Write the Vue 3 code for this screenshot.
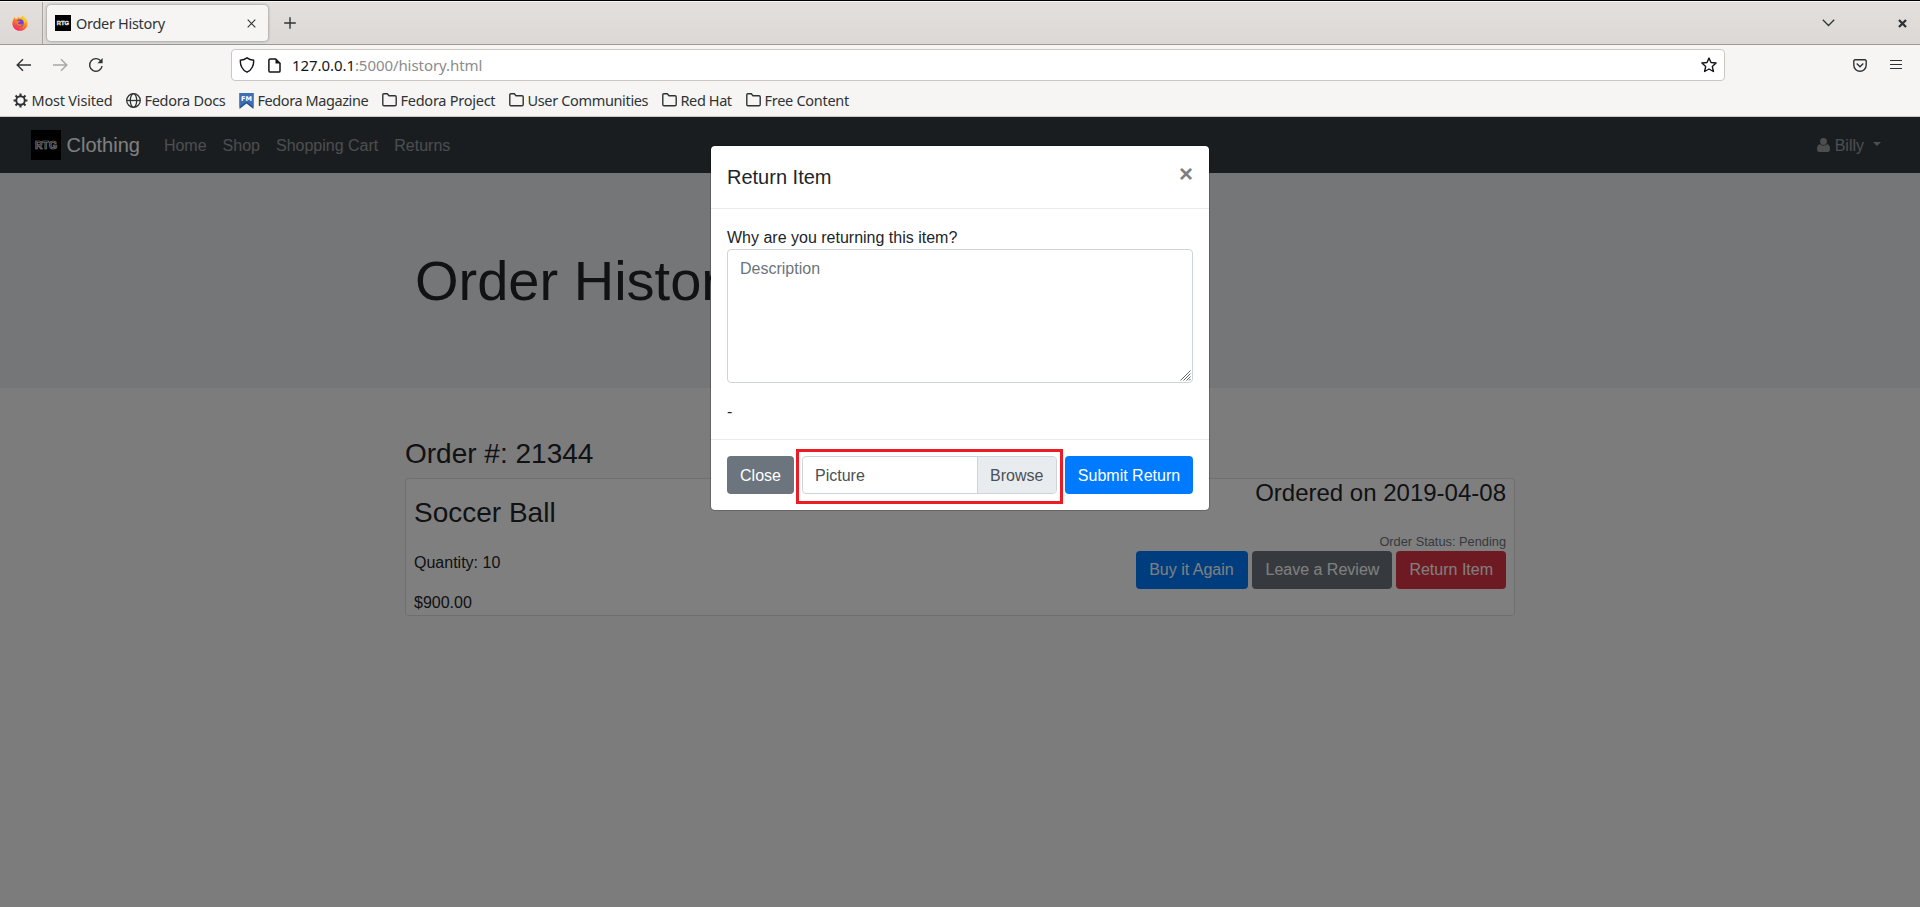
<script setup>
const bookmarks = [
  { label: 'Most Visited', icon: 'gear', width: 80, gap: 14, spacing: -0.2 },
  { label: 'Fedora Docs', icon: 'globe', width: 81, gap: 13, spacing: -0.3 },
  { label: 'Fedora Magazine', icon: 'fm', width: 111, gap: 13, spacing: -0.42 },
  { label: 'Fedora Project', icon: 'folder', width: 95, gap: 13, spacing: -0.25 },
  { label: 'User Communities', icon: 'folder', width: 121, gap: 13, spacing: -0.35 },
  { label: 'Red Hat', icon: 'folder', width: 52, gap: 13, spacing: -0.4 },
  { label: 'Free Content', icon: 'folder', width: 85, gap: 0, spacing: -0.28 },
]
const links = ['Home', 'Shop', 'Shopping Cart', 'Returns']
</script>

<template>
  <div class="window">
    <header class="chrome">
      <div class="tabbar">
        <div class="pinned">
          <svg width="16" height="16" viewBox="0 0 16 16">
            <defs>
              <linearGradient id="flame" x1="0.8" y1="0" x2="0.2" y2="1">
                <stop offset="0" stop-color="#ffe226" />
                <stop offset="0.45" stop-color="#ff8a1e" />
                <stop offset="1" stop-color="#f5156c" />
              </linearGradient>
            </defs>
            <path d="M2.3 2.2 3.5 3.8 5.4 3.4 6.2 1.8 7.6 3 9.3 2.6 10.3.3c1 1.6 4.6 3 5.2 7.6.5 4.400-3 7.900-7.500 7.900S.4 12.600.4 8.500c0-2.700 1-3.600 1.900-6.300z" fill="url(#flame)" />
            <circle cx="8" cy="8" r="3.700" fill="#7043d9" />
            <path d="M3.800 6.300c1.600-.8 3.500-.4 4.700.3-1.300.4-1.600 1-2.700 1.200.3 1.800 3.200 2.300 5 1-1 3.600-6.800 3.300-7-2.500z" fill="#ff7a1f" />
            <path d="M10 3c1.500 1.200 2.800 3 2.300 5.500l1.700-2-1-3-2.600-2.500z" fill="#ffc928" />
          </svg>
        </div>
        <div class="tab">
          <svg width="16" height="16" viewBox="0 0 30 30">
            <rect width="30" height="30" />
            <text x="15" y="18.500" text-anchor="middle" textLength="23" lengthAdjust="spacingAndGlyphs" class="logo-text bright">RTG</text>
          </svg>
          <span class="tab-title">Order History</span>
          <svg width="9" height="9" viewBox="0 0 9 9" class="line"><path d="M.7.7l7.600 7.600M8.300.7.7 8.300" stroke-width="1.100" /></svg>
        </div>
        <svg class="plus line" width="12" height="12" viewBox="0 0 12 12"><path d="M6 .2v11.600M.2 6h11.600" stroke-width="1.400" /></svg>
        <div class="winctl">
          <svg class="line" width="13" height="8" viewBox="0 0 13 8"><path d="M.8.8l5.700 5.700L12.200.8" stroke-width="1.300" /></svg>
          <svg class="line" width="9" height="9" viewBox="0 0 9 9"><path d="M1 1l7 7M8 1 1 8" stroke-width="2.300" /></svg>
        </div>
      </div>

      <div class="toolbar">
        <div class="nav-buttons">
          <svg class="line" width="16" height="14" viewBox="0 0 16 14"><path d="M7 1.200 1.200 7 7 12.800M1.200 7h13.800" stroke-width="1.400" /></svg>
          <svg class="line dim" width="16" height="14" viewBox="0 0 16 14"><path d="M9 1.200 14.800 7 9 12.800M14.800 7H1" stroke-width="1.400" /></svg>
          <svg class="line" width="16" height="16" viewBox="0 0 16 16"><path d="M13.300 4.700A6.300 6.300 0 1 0 14.100 9" stroke-width="1.400" /><path d="M14.600 1v5.200H9.400z" fill="#2e3436" stroke="none" /></svg>
        </div>
        <div class="urlbar">
          <svg class="line dark shield" width="16" height="16" viewBox="0 0 16 16"><path d="M8 .9C6.300 2.300 3.900 3.100 1.400 3.200 1 8 3.200 13.200 8 15.200c4.800-2 7-7.200 6.600-12C12.100 3.100 9.700 2.300 8 .9z" stroke-width="1.400" /></svg>
          <svg class="line dark" width="13" height="15" viewBox="0 0 13 15"><path d="M2.300.9h5.300l4.400 4.400v7.600a1.200 1.200 0 0 1-1.200 1.200H2.300A1.400 1.400 0 0 1 .9 12.900V2.300A1.400 1.400 0 0 1 2.300.9z" stroke-width="1.500" /><path d="M7.500.8v4.600H12z" fill="#15141a" stroke="none" /></svg>
          <span class="url"><b>127.0.0.1</b>:5000/history.html</span>
          <svg class="line dark" width="16" height="16" viewBox="0 0 16 16"><path d="M8 1.100l2 4.400 5.100.5-3.800 3.400 1.100 5.100L8 12l-4.400 2.500 1.100-5.100L.9 6 6 5.500z" stroke-width="1.400" stroke-linejoin="round" /></svg>
        </div>
        <div class="tools">
          <svg class="line" width="14" height="13" viewBox="0 0 14 13"><path d="M2 .8h10a1.200 1.200 0 0 1 1.200 1.200v4a6.200 6.200 0 0 1-12.400 0V2A1.200 1.200 0 0 1 2 .8z" stroke-width="1.400" /><path d="M3.700 4.500 7 7.700l3.300-3.200" stroke-width="1.400" /></svg>
          <svg class="line" width="12" height="12" viewBox="0 0 12 12"><path d="M0 1.500h12M0 5.500h12M0 9.500h12" stroke-width="1.200" /></svg>
        </div>
      </div>

      <nav class="bookmarks">
        <a v-for="b in bookmarks" :key="b.label" class="bookmark" :style="{ marginRight: b.gap + 'px' }">
          <svg v-if="b.icon === 'gear'" class="line" width="15" height="15" viewBox="0 0 16 16">
            <circle cx="8" cy="8" r="4.500" stroke-width="2" />
            <path d="M8 .6v3M8 12.400v3M.6 8h3M12.400 8h3M2.700 2.700l2.100 2.100M11.200 11.200l2.100 2.100M13.300 2.700l-2.100 2.100M4.800 11.200l-2.100 2.100" stroke-width="2.200" />
          </svg>
          <svg v-else-if="b.icon === 'globe'" class="line" width="15" height="15" viewBox="0 0 15 15">
            <circle cx="7.500" cy="7.500" r="6.800" stroke-width="1.300" />
            <ellipse cx="7.500" cy="7.500" rx="3.200" ry="6.800" stroke-width="1.300" />
            <path d="M1 7.500h13" stroke-width="1.300" />
          </svg>
          <svg v-else-if="b.icon === 'fm'" width="15" height="16" viewBox="0 0 15 16">
            <path d="M.5 0h14v16L7.500 10.500.5 16z" fill="#294f8d" />
            <path d="M.5 0h14v14L7.500 8.800.5 14z" fill="#3c6eb4" />
            <text x="7.500" y="8" text-anchor="middle" textLength="11" class="fm-text">FM</text>
          </svg>
          <svg v-else class="line folder" width="15" height="14" viewBox="0 0 15 14">
            <path d="M1.800.8h3.500l1.700 2h6a1.200 1.200 0 0 1 1.200 1.200v7.500a1.200 1.200 0 0 1-1.200 1.200H2A1.200 1.200 0 0 1 .8 11.500V1.800a1 1 0 0 1 1-1z" stroke-width="1.400" />
          </svg>
          <span :style="{ width: b.width + 'px', letterSpacing: b.spacing + 'px' }">{{ b.label }}</span>
        </a>
      </nav>
    </header>

    <div class="viewport">
      <nav class="navbar">
        <svg width="30" height="30" viewBox="0 0 30 30">
          <rect width="30" height="30" />
          <text x="15" y="19" text-anchor="middle" textLength="22" lengthAdjust="spacingAndGlyphs" class="logo-text">RTG</text>
        </svg>
        <span class="brand">Clothing</span>
        <a v-for="l in links" :key="l" class="nav-link">{{ l }}</a>
        <div class="user">
          <svg width="13" height="14" viewBox="0 0 13 14"><circle cx="6.500" cy="3.500" r="3.400" /><path d="M3 6.300c2 1.800 5 1.800 7 0 2.400.4 3 2.500 3 5.200 0 1.500-1 2.500-2.300 2.500H2.300C1 14 0 13 0 11.500c0-2.700.6-4.800 3-5.200z" /></svg>
          <span>Billy</span>
          <i class="caret"></i>
        </div>
      </nav>

      <section class="jumbotron">
        <h1>Order History</h1>
      </section>

      <main class="container">
        <h3>Order #: 21344</h3>
        <article class="card">
          <div class="item">
            <h3>Soccer Ball</h3>
            <p>Quantity: 10</p>
            <p>$900.00</p>
          </div>
          <div class="order">
            <h4>Ordered on 2019-04-08</h4>
            <small>Order Status: Pending</small>
            <div class="actions">
              <button class="btn primary buy">Buy it Again</button>
              <button class="btn secondary review">Leave a Review</button>
              <button class="btn danger">Return Item</button>
            </div>
          </div>
        </article>
      </main>

      <div class="backdrop">
        <div class="modal">
          <header class="modal-header">
            <h5>Return Item</h5>
            <span class="close">×</span>
          </header>
          <div class="modal-body">
            <label>Why are you returning this item?</label>
            <div class="textarea">
              <span>Description</span>
              <svg width="11" height="11" viewBox="0 0 11 11"><path d="M.5 10.500l10-10M3.500 10.500l7-7M6.500 10.500l4-4M9 10.500l1.500-1.500" stroke="#666" fill="none" /></svg>
            </div>
            <p>-</p>
          </div>
          <footer class="modal-footer">
            <button class="btn secondary close-btn">Close</button>
            <div class="highlight">
              <div class="file">
                <span class="file-name">Picture</span>
                <span class="file-browse">Browse</span>
              </div>
            </div>
            <button class="btn primary submit-btn">Submit Return</button>
          </footer>
        </div>
      </div>
    </div>
  </div>
</template>

<style>
body { margin: 0; overflow: hidden; }
</style>

<style scoped>
* { box-sizing: border-box; }
h1, h3, h4, h5, p { margin: 0; font-weight: 400; }
svg { display: block; flex: none; }
.window { width: 1920px; height: 907px; display: flex; flex-direction: column; overflow: hidden; }

.chrome { height: 117px; flex: none; background: #f6f5f3; border-top: 1px solid #000; border-bottom: 1px solid #cdc7c2; font: 14.500px/20px "Noto Sans", "Open Sans", sans-serif; color: #2e3436; }
.line { fill: none; stroke: #2e3436; }
.line.dark { stroke: #15141a; }
.line.dim { opacity: .4; }
.tabbar { height: 44px; background: linear-gradient(#e2dfdc, #dcd8d5); border-top: 1px solid #f6f5f4; border-bottom: 1px solid #9b9895; display: flex; align-items: center; }
.pinned { width: 43px; height: 42px; border-right: 1px solid #a9a5a2; padding: 13px 0 0 12px; }
.tab { width: 221px; height: 36px; margin: 0 0 0 4px; background: #f6f5f3; border-radius: 4px; box-shadow: 0 0 3px rgba(0, 0, 0, .45); display: flex; align-items: center; padding: 0 12px 0 8px; }
.tab-title { margin-left: 5px; flex: 1; letter-spacing: -.3px; white-space: nowrap; }
.plus { margin-left: 15.500px; }
.winctl { margin-left: auto; display: flex; align-items: center; gap: 63px; padding-right: 13.500px; }

.toolbar { height: 41px; padding-top: 4px; display: flex; }
.nav-buttons { width: 231px; height: 32px; padding-left: 16px; display: flex; align-items: center; gap: 20px; }
.urlbar { width: 1494px; height: 32px; background: #fff; border: 1px solid #cdc7c2; border-radius: 4px; display: flex; align-items: center; padding: 0 7px 0 7px; }
.shield { margin-right: 13px; }
.url { margin-left: 11px; flex: 1; color: #8c8c8c; font-size: 15px; letter-spacing: -.07px; }
.url b { font-weight: 400; color: #15141a; }
.tools { flex: 1; display: flex; align-items: center; gap: 23px; padding-left: 128px; height: 32px; }

.bookmarks { height: 29px; display: flex; align-items: center; padding: 0 0 0 12.500px; }
.bookmark { display: flex; align-items: center; gap: 4px; height: 24px; }
.bookmark span { white-space: nowrap; margin-top: -1px; }
.folder { margin-top: -1px; }
.fm-text { font: 700 6.500px "DejaVu Sans", sans-serif; fill: #fff; }

.viewport { flex: 1; position: relative; background: #f8f8f8; color: #212529; font: 16px/24px "Liberation Sans", Arial, sans-serif; }
.navbar { height: 56px; background: #343a40; display: flex; align-items: center; padding: 0 39px 0 31px; color: rgba(255, 255, 255, .5); }
.logo-text { font: 700 10px "Liberation Sans", sans-serif; fill: #000; stroke: #fff; stroke-width: .7px; }
.bright { fill: #999; }
.brand { font-size: 20px; color: #fff; margin: 0 16px 0 5.500px; line-height: 30px; }
.nav-link { padding: 1px 8px 0; }
.user { margin-left: auto; display: flex; align-items: center; }
.user span { padding-top: 1px; }
.user svg { fill: currentColor; margin-right: 4.500px; }
.caret { margin: -3px 0 0 9px; border: 4.800px solid transparent; border-top-color: currentColor; border-bottom: 0; }
.jumbotron { height: 215px; background: #e9ecef; padding: 74px 0 0 415px; }
.jumbotron h1 { font-size: 56px; line-height: 67px; }
.container { width: 1110px; margin: 49px auto 0; }
h3 { font-size: 28px; line-height: 33.600px; }
.card { margin-top: 7px; height: 138px; background: #fff; border: 1px solid rgba(0, 0, 0, .125); border-radius: 4px; padding: 0 8px; display: flex; justify-content: space-between; }
.item { padding-top: 17px; }
.item h3 { margin-bottom: 22px; }
.item p { margin-bottom: 16px; }
.order { display: flex; flex-direction: column; align-items: flex-end; }
h4 { font-size: 24px; line-height: 29px; margin-top: -1px; }
small { font-size: 12.800px; line-height: 20px; color: #6c757d; margin-top: 25px; }
.actions { display: flex; gap: 4px; margin-top: -1px; }
.btn { height: 38px; border: 0; border-radius: 4px; padding: 0 13px; color: #fff; font: 16px/24px "Liberation Sans", Arial, sans-serif; white-space: nowrap; }
.buy { width: 112px; padding: 0 14px 0 12px; }
.review { width: 140px; }
.primary { background: #007bff; }
.secondary { background: #6c757d; }
.danger { background: #dc3545; }

.backdrop { position: absolute; inset: 0; background: rgba(0, 0, 0, .5); padding-top: 28px; }
.modal { width: 500px; height: 366px; margin: 0 auto; background: #fff; background-clip: padding-box; border: 1px solid rgba(0, 0, 0, .2); border-radius: 5px; }
.modal-header { height: 63px; padding: 16px; border-bottom: 1px solid #e9ecef; display: flex; justify-content: space-between; }
h5 { font-size: 20px; line-height: 30px; }
.close { font-size: 24px; font-weight: 700; line-height: 24px; color: #7f7f7f; }
.modal-body { padding: 17px 16px 16px; height: 230px; }
.modal-body label { display: block; height: 23px; }
.textarea { height: 134px; border: 1px solid #ced4da; border-radius: 4px; padding: 7px 12px; color: #6c757d; position: relative; margin-bottom: 17px; }
.textarea svg { position: absolute; right: 1px; bottom: 1px; }
.modal-footer { height: 71px; border-top: 1px solid #e9ecef; display: flex; align-items: flex-start; padding: 9px 16px 0; gap: 2px; }
.close-btn, .submit-btn { margin-top: 7px; padding: 2px 0 0; }
.close-btn { width: 67px; }
.submit-btn { width: 128px; }
.highlight { width: 267px; height: 55px; border: 3px solid #ed1c24; padding: 4px 3px; }
.file { width: 255px; height: 38px; display: flex; border: 1px solid #ced4da; border-radius: 4px; line-height: 24px; color: #495057; overflow: hidden; }
.file-name { flex: 1; padding: 7px 12px; }
.file-browse { width: 79px; background: #e9ecef; border-left: 1px solid #ced4da; padding: 7px 12px; }
</style>
